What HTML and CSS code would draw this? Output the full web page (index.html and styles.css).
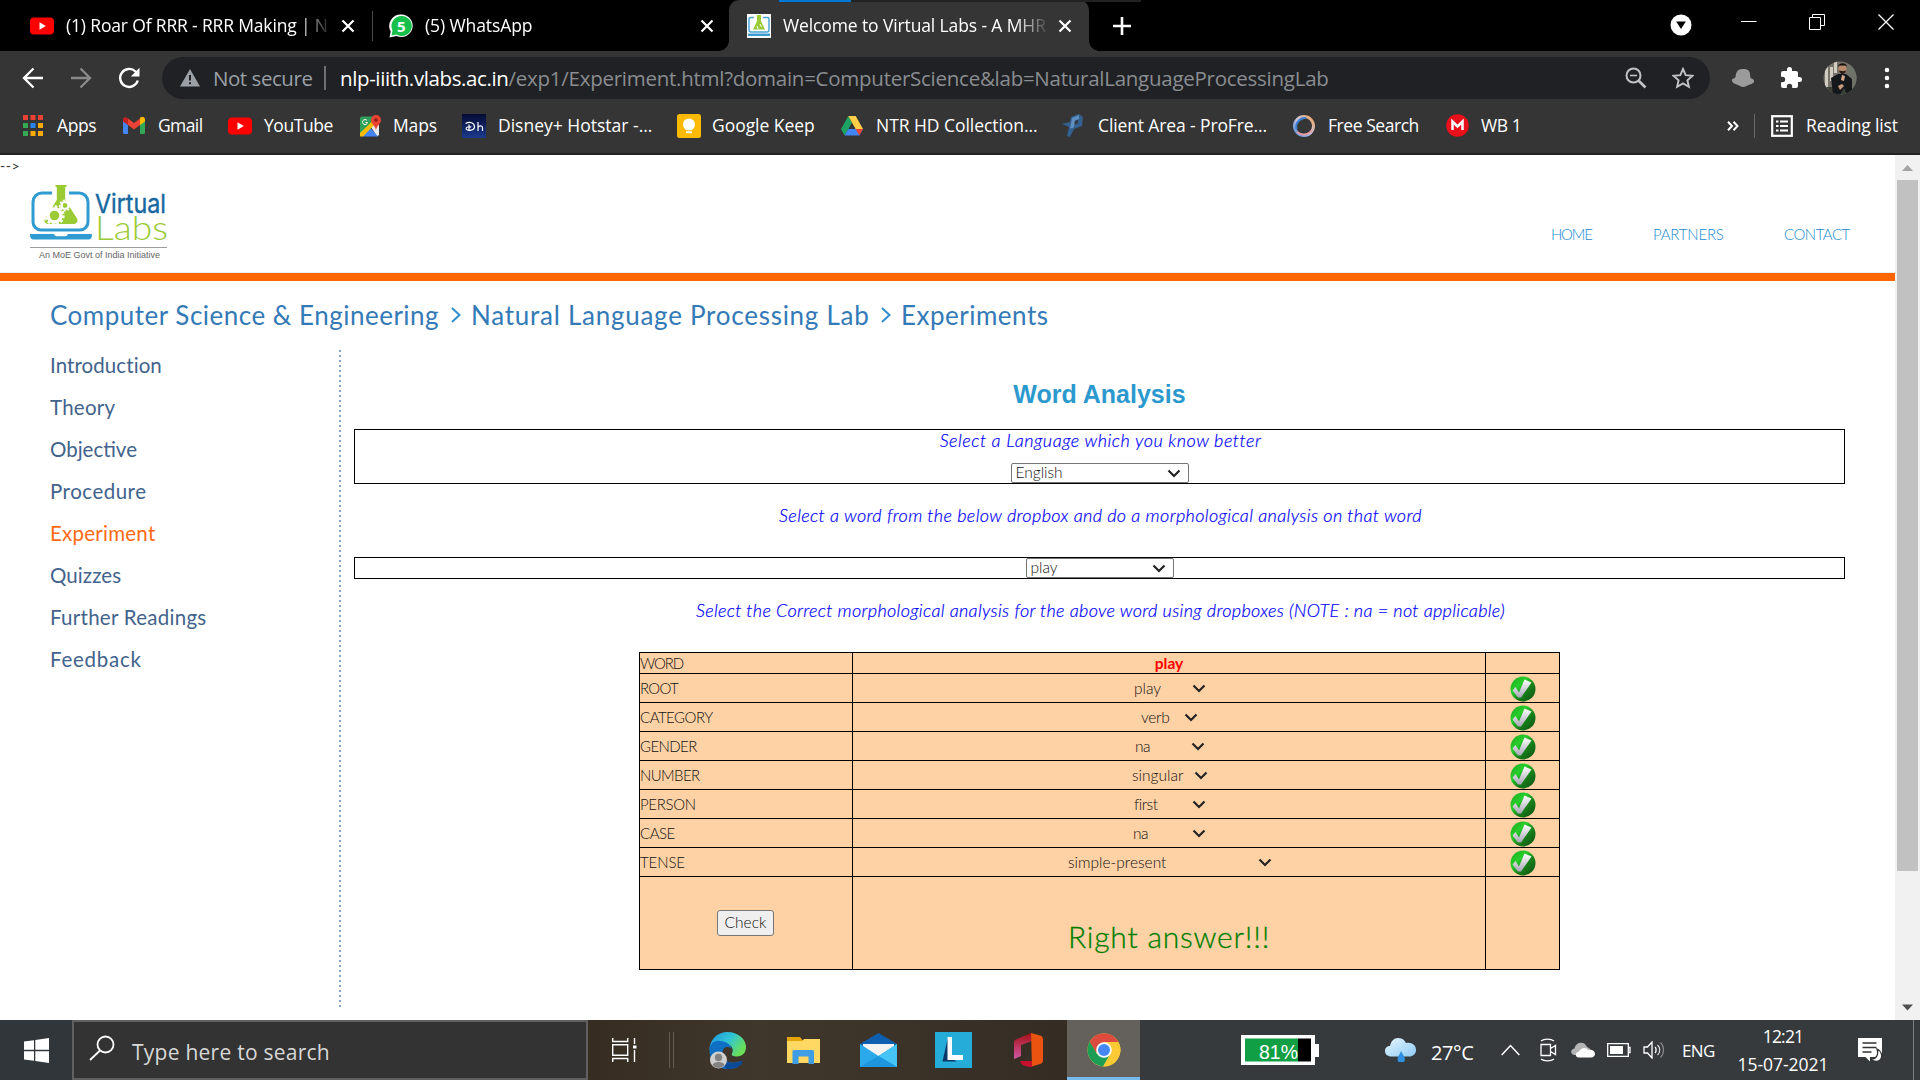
FILE: index.html
```html
<!DOCTYPE html>
<html lang="en">
<head>
<meta charset="utf-8">
<title>Welcome to Virtual Labs</title>
<link rel="stylesheet" href="styles.css">
</head>
<body>
<svg class="defs" width="0" height="0">
  <defs>
    <linearGradient id="tickGreen" x1="0" y1="0" x2="1" y2="1"><stop offset="0" stop-color="#1fa51f"/><stop offset=".35" stop-color="#27cf2b"/><stop offset=".6" stop-color="#178019"/><stop offset="1" stop-color="#0d4d12"/></linearGradient>
    <linearGradient id="tickWhite" x1="0" y1="0" x2="0" y2="1"><stop offset="0" stop-color="#ffffff"/><stop offset="1" stop-color="#a9a7b8"/></linearGradient>
    <symbol id="close" viewBox="0 0 14 14"><path d="M1.5 1.5l11 11M12.5 1.5l-11 11" stroke="#fff" stroke-width="2.2" fill="none"/></symbol>
    <symbol id="youtube" viewBox="0 0 24 24"><rect y="3.5" width="24" height="17" rx="4" fill="#f00"/><path d="M9.5 8.2v7.6l6.3-3.8z" fill="#fff"/></symbol>
    <symbol id="caret" viewBox="0 0 14 14"><path d="M1.500 4.500L7 10l5.500-5.500" stroke="#222" stroke-width="2.200" fill="none"/></symbol>
    <symbol id="crumb" viewBox="0 0 12 16"><path d="M2 1l7.500 7L2 15" stroke="#2f8fd0" stroke-width="2" fill="none"/></symbol>
    <symbol id="tick" viewBox="0 0 26 26"><circle cx="13" cy="13" r="12.500" fill="url(#tickGreen)"/><path d="M2.500 14.500l3-3.500 3.500 5.500L14.500 3.500l7 3L11 21.500H8z" fill="url(#tickWhite)"/></symbol>
  </defs>
</svg>

<header class="tabstrip">
  <div class="tab tab-first"><svg width="24" height="24"><use href="#youtube"/></svg><span class="tab-title t-rrr">(1) Roar Of RRR - RRR Making | N</span><svg width="14" height="14"><use href="#close"/></svg></div>
  <i class="tab-rule"></i>
  <div class="tab tab-second">
    <svg width="24" height="24" viewBox="0 0 24 24"><path d="M12.500.5a11.300 11.300 0 1 1-5 21.500L.5 23.500l1.200-6A11.500 11.500 0 0 1 12.500.5z" fill="#fff"/><path d="M12.500 2a10 10 0 1 1-5 18.500L2.500 21.500l1-5A10 10 0 0 1 12.500 2z" fill="#17bf4b"/><text x="12.200" y="17.500" text-anchor="middle" class="wa-count">5</text></svg>
    <span class="tab-title t-wa">(5) WhatsApp</span><svg width="14" height="14"><use href="#close"/></svg></div>
  <div class="tab tab-active">
    <svg width="24" height="24" viewBox="0 0 24 24"><rect width="24" height="24" fill="#fff"/><path d="M7 3.500H3.500a1.500 1.500 0 0 0-1.500 1.500V16a2 2 0 0 0 2 2h16a2 2 0 0 0 2-2V5a1.500 1.500 0 0 0-1.500-1.500H16" fill="none" stroke="#4ba6d6" stroke-width="1.500"/><path d="M10 1h4v6l4 8.500H6L10 7z" fill="#9acb35"/><path d="M1 19.500h22V22H1z" fill="#3d9bd0"/><path d="M10 12l1 3M13 10l1.500 3" stroke="#fff"/></svg>
    <span class="tab-title t-vl">Welcome to Virtual Labs - A MHR</span><svg width="14" height="14"><use href="#close"/></svg></div>
  <svg class="new-tab" width="18" height="18" viewBox="0 0 18 18"><path d="M9 0v18M0 9h18" stroke="#fff" stroke-width="2.600"/></svg>
  <div class="window-controls">
    <svg width="22" height="22" viewBox="0 0 22 22"><circle cx="11" cy="11" r="10.500" fill="#fff"/><path d="M6.200 7.500h9.600L11 15z" fill="#000"/></svg>
    <svg class="wc wc-min" width="16" height="16" viewBox="0 0 16 16"><path d="M0 7.500h15.500" stroke="#fff"/></svg>
    <svg class="wc wc-max" width="16" height="16" viewBox="0 0 16 16"><path d="M.5 3.500h11v12H.5zM3.500 3V.5h12v11h-3.500" stroke="#fff" fill="none"/></svg>
    <svg class="wc" width="16" height="16" viewBox="0 0 16 16"><path d="M.5.5l15 15M15.500.5l-15 15" stroke="#fff" stroke-width="1.300"/></svg>
  </div>
  <div class="load-line"><i></i></div>
</header>

<div class="toolbar">
  <svg width="22" height="22" viewBox="0 0 22 22"><path d="M21 11H2.500M11.500 1.500L2 11l9.500 9.500" stroke="#fff" stroke-width="2.300" fill="none"/></svg>
  <svg class="forward" width="22" height="22" viewBox="0 0 22 22"><path d="M1 11h18.500M10.500 1.500L20 11l-9.500 9.500" stroke="#8a8a8a" stroke-width="2.300" fill="none"/></svg>
  <svg class="reload" width="22" height="22" viewBox="0 0 22 22"><path d="M19.800 13.500A9 9 0 1 1 17.500 4.500l2 2" stroke="#fff" stroke-width="2.400" fill="none"/><path d="M21.500.8v8.700h-8.700z" fill="#fff"/></svg>
  <div class="omnibox">
    <svg width="20" height="18" viewBox="0 0 20 18"><path d="M10 0l10 17.500H0z" fill="#9aa0a6"/><path d="M10 6v5.500M10 13.300v2" stroke="#202124" stroke-width="2"/></svg>
    <span class="not-secure">Not secure</span><i class="omni-rule"></i>
    <span class="url"><b class="u-host">nlp-iiith.vlabs.ac.in</b><span class="u-path">/exp1/Experiment.html?domain=ComputerScience&amp;lab=NaturalLanguageProcessingLab</span></span>
    <svg class="zoomed" width="22" height="22" viewBox="0 0 22 22"><circle cx="8.500" cy="8.500" r="7" stroke="#c0c2c4" stroke-width="2" fill="none"/><path d="M5 8.500h7" stroke="#c0c2c4" stroke-width="1.600"/><path d="M13.500 13.500l7 7" stroke="#c0c2c4" stroke-width="2.600"/></svg>
    <svg width="22" height="22" viewBox="0 0 22 22"><path d="M11 2l2.700 6.200 6.800.6-5.100 4.500 1.500 6.600-5.900-3.500-5.900 3.500 1.500-6.600L1.500 8.800l6.800-.6z" stroke="#c0c2c4" stroke-width="1.900" fill="none"/></svg>
  </div>
  <svg class="hat" width="24" height="20" viewBox="0 0 24 20"><path d="M12 1c5 0 6.500 1.500 7 5l.5 4c3 1 4 2.500 3.500 4-1 2-5 2.500-6.500 3.500-2 1.500-5 2-7.500.5C6.500 16.500 2 16 .8 12.500.5 10.500 4 10.500 4.500 9 5 6 5 1 12 1z" fill="#9b9b9b"/></svg>
  <svg class="puzzle" width="24" height="24" viewBox="0 0 24 24"><path d="M20.500 11H19V7a2 2 0 0 0-2-2h-4V3.500a2.500 2.500 0 0 0-5 0V5H4a2 2 0 0 0-2 2v3.800h1.500a2.700 2.700 0 0 1 0 5.400H2V20a2 2 0 0 0 2 2h3.800v-1.500a2.700 2.700 0 0 1 5.400 0V22H17a2 2 0 0 0 2-2v-4h1.500a2.500 2.500 0 0 0 0-5z" fill="#fff"/></svg>
  <svg class="avatar" width="34" height="34" viewBox="0 0 34 34"><clipPath id="av"><circle cx="17" cy="17" r="16.500"/></clipPath><g clip-path="url(#av)"><rect width="34" height="34" fill="#77736b"/><path d="M2 0h3v34H2zM7 6h3v14H7zM11 0h3v12h-3z" fill="#d0ccc0"/><path d="M0 26h34v8H0z" fill="#3b4038"/><path d="M26 4h8v24h-8z" fill="#6d7368"/><path d="M8 17l7-4h8l6 5v16h-5l-3-7-4 7H10z" fill="#15181a"/><circle cx="19.500" cy="8" r="4" fill="#b98a6e"/><path d="M15 6c0-5 9-5 9 0l-1.500-1.500h-6z" fill="#17110e"/><path d="M16 9.500c1 4.500 6 4.500 7 0l-3 .8z" fill="#2a1c16"/><path d="M19 14l3 1-1 5-3-1z" fill="#d5ab8e"/><path d="M15 25l4-2 2 2-4 4z" fill="#c99c80"/></g></svg>
  <svg class="menu-dots" width="6" height="22" viewBox="0 0 6 22"><g fill="#fff"><circle cx="3" cy="3" r="2.300"/><circle cx="3" cy="11" r="2.300"/><circle cx="3" cy="19" r="2.300"/></g></svg>
</div>

<nav class="bookmarks">
  <a class="bm bm-apps"><svg width="20" height="22" viewBox="0 0 20 22"><path d="M0 0h5v5H0zM7.500 0h5v5h-5zM15 0h5v5h-5z" fill="#ea4335"/><path d="M0 8h5v5H0zM0 16h5v5H0z" fill="#34a853"/><path d="M7.500 8h5v5h-5z" fill="#2a84f0"/><path d="M15 8h5v5h-5zM7.500 16h5v5h-5zM15 16h5v5h-5z" fill="#fbab08"/></svg><span>Apps</span></a>
  <a class="bm bm-gmail"><svg width="22" height="17" viewBox="0 0 22 17"><path d="M0 3v12.500A1.500 1.500 0 0 0 1.500 17H5V7z" fill="#4285f4"/><path d="M22 3v12.500a1.500 1.500 0 0 1-1.500 1.500H17V7z" fill="#34a853"/><path d="M17 2v6l5-3.500V2.500C22 0 19-1 17 .8z" fill="#fbbc04"/><path d="M5 8V1.500l6 4.500 6-4.500V8l-6 4.500z" fill="#ea4335"/><path d="M0 2.500v2L5 8V1.500C3-.5 0 0 0 2.500z" fill="#c5221f"/></svg><span>Gmail</span></a>
  <a class="bm bm-yt"><svg width="24" height="24"><use href="#youtube"/></svg><span>YouTube</span></a>
  <a class="bm bm-maps"><svg width="22" height="22" viewBox="0 0 22 22"><path d="M0 3.500a2 2 0 0 1 2-2h15V8L6 18l-6 1z" fill="#2f9e58"/><path d="M11 12l6-6 2 1v13L17 21.500z" fill="#e8eaed"/><path d="M2 21.500l8.500-8.500 7.500 8.500z" fill="#4285f4"/><path d="M0 18L13.500 5l2.500 3L3 21.500H0z" fill="#fbbc04"/><path d="M16 0a5 5 0 0 1 5 5c0 4-4 5-5 10-1-5-5-6-5-10a5 5 0 0 1 5-5z" fill="#ea4335"/><circle cx="16" cy="5" r="1.800" fill="#8b1a12"/><path d="M7 5.500a2.500 2.500 0 1 0 .5 2H5.500" stroke="#fff" fill="none"/></svg><span>Maps</span></a>
  <a class="bm bm-hot"><svg width="24" height="24" viewBox="0 0 24 24"><defs><linearGradient id="hs" x2="0" y2="1"><stop offset="0" stop-color="#060b34"/><stop offset="1" stop-color="#1b3a8c"/></linearGradient></defs><rect width="24" height="24" fill="url(#hs)"/><path d="M3.500 9.500c4-2 9-1 9 3.200 0 4-7 4.500-8.300 2.300-.8-1.600 3.300-3 5-1.800M7 10.500v6M16 8v9M16 13.500c1-2.300 4.500-2.300 4.500.3V17" stroke="#fff" stroke-width="1.200" fill="none"/></svg><span>Disney+ Hotstar -...</span></a>
  <a class="bm bm-keep"><svg width="24" height="24" viewBox="0 0 24 24"><rect width="24" height="24" rx="2.500" fill="#fdba03"/><circle cx="12" cy="10.500" r="6" fill="#fff"/><path d="M8.500 12h7v4h-7zM9 17.300h6v2H9z" fill="#fff"/></svg><span>Google Keep</span></a>
  <a class="bm bm-drive"><svg width="22" height="20" viewBox="0 0 22 20"><path d="M7.300 0L0 13l3.700 6.500L11 6.500z" fill="#1da362"/><path d="M7.300 0h7.400L22 13h-7.400z" fill="#ffcf48"/><path d="M3.700 19.500L7.300 13H22l-3.700 6.500z" fill="#4285f4"/><path d="M18.300 19.500L14.600 13H22z" fill="#ea4335"/></svg><span>NTR HD Collection...</span></a>
  <a class="bm bm-pro"><svg width="22" height="24" viewBox="0 0 22 24"><path d="M9 3l8-3 4 3-1 9-8 3-4 8-3-1 2-9-7-3 8-2z" fill="#33608f"/><path d="M10 4l7-3v4l-4 1.500-1 7-4 1z" fill="#5f8fc0"/><path d="M13 7l3-1-.5 3.500-3 1z" fill="#353535"/></svg><span>Client Area - ProFre...</span></a>
  <a class="bm bm-free"><svg width="24" height="24" viewBox="0 0 24 24"><defs><linearGradient id="rg" x1="0" y1="1" x2="1" y2="0"><stop offset="0" stop-color="#4b8fe0"/><stop offset=".5" stop-color="#c9c3dc"/><stop offset="1" stop-color="#f1a35a"/></linearGradient></defs><circle cx="12" cy="12" r="9.500" stroke="url(#rg)" stroke-width="3" fill="none"/><path d="M5 18a10 10 0 0 0 15-2" stroke="#e59aa0" stroke-width="2" fill="none"/><path d="M4.500 15A9 9 0 0 1 14 4" stroke="#3b7fd1" stroke-width="2" fill="none"/></svg><span>Free Search</span></a>
  <a class="bm bm-wb"><svg width="23" height="23" viewBox="0 0 23 23"><circle cx="11.500" cy="11.500" r="11.300" fill="#e8101a"/><path d="M6.500 16V7.500l5 5 5-5V16" stroke="#fff" stroke-width="2.500" fill="none"/></svg><span>WB 1</span></a>
  <svg class="more" width="12" height="10" viewBox="0 0 12 10"><path d="M1 .8L5 5 1 9.200M6.500.8l4 4.200-4 4.200" stroke="#fff" stroke-width="2" fill="none"/></svg>
  <i class="bm-rule"></i>
  <a class="bm bm-list"><svg width="22" height="22" viewBox="0 0 22 22"><rect x="1.200" y="1.200" width="19.600" height="19.600" stroke="#fff" stroke-width="2.200" fill="none"/><path d="M5 6.500h2.500M9 6.500h8M5 11h2.500M9 11h8M5 15.500h2.500M9 15.500h8" stroke="#fff" stroke-width="2.200"/></svg><span>Reading list</span></a>
</nav>

<div class="page">
  <div class="content">
    <div class="masthead">
      <div class="stray">--&gt;</div>
      <div class="mast-row">
        <svg class="logo" width="140" height="76" viewBox="0 0 140 76">
          <path d="M22 8H12a9 9 0 0 0-9 9v20a8 8 0 0 0 8 8h39a8 8 0 0 0 8-8V17a9 9 0 0 0-9-9H39" stroke="#2f9bd0" stroke-width="3" fill="none"/>
          <path d="M25.500 0h11v2h-1.300v13L47 33.500c1.500 3-.5 5.500-3.500 5.500h-25c-3 0-5-2.500-3.500-5.500L26.800 15V2h-1.300z" fill="#9acb35"/>
          <circle cx="24.500" cy="30.500" r="6.500" stroke="#fff" stroke-width="3.400" fill="none"/><circle cx="24.500" cy="30.500" r="9" stroke="#fff" stroke-width="2.400" stroke-dasharray="2.700 2" fill="none"/>
          <circle cx="35" cy="20.500" r="3.500" stroke="#fff" stroke-width="2.200" fill="none"/><circle cx="35" cy="20.500" r="5.300" stroke="#fff" stroke-width="1.600" stroke-dasharray="2 1.700" fill="none"/>
          <path d="M0 49h24c1 2 2 2.300 4 2.300h6c2 0 3-.3 4-2.300h24c0 4-1 5.500-4 5.500H4c-3 0-4-1.500-4-5.500z" fill="#2f9bd0"/>
          <text x="65" y="28" class="lg-virtual" textLength="71" lengthAdjust="spacingAndGlyphs">Virtual</text>
          <text x="65" y="55" class="lg-labs" textLength="73" lengthAdjust="spacingAndGlyphs">Labs</text>
          <path d="M0 62.500h137" stroke="#9c9c9c" stroke-width="1.200"/>
          <text x="9" y="73" class="lg-sub" textLength="121" lengthAdjust="spacingAndGlyphs">An MoE Govt of India Initiative</text>
        </svg>
        <div class="mast-nav"><a class="n-home">HOME</a><a class="n-part">PARTNERS</a><a class="n-cont">CONTACT</a></div>
      </div>
    </div>
    <div class="breadcrumb"><a class="c-cse">Computer Science &amp; Engineering</a><svg width="12" height="16"><use href="#crumb"/></svg><a class="c-nlp">Natural Language Processing Lab</a><svg width="12" height="16"><use href="#crumb"/></svg><a class="c-exp">Experiments</a></div>
    <div class="columns">
      <ul class="side">
        <li class="s1">Introduction</li><li class="s2">Theory</li><li class="s3">Objective</li><li class="s4">Procedure</li><li class="s5 current">Experiment</li><li class="s6">Quizzes</li><li class="s7">Further Readings</li><li class="s8">Feedback</li>
      </ul>
      <i class="dots"></i>
      <main class="lab">
        <h1>Word Analysis</h1>
        <div class="box">
          <p class="hint hint-lang">Select a Language which you know better</p>
          <div class="select select-lang"><span>English</span><svg width="14" height="14"><use href="#caret"/></svg></div>
        </div>
        <p class="hint hint-word">Select a word from the below dropbox and do a morphological analysis on that word</p>
        <div class="box box-word"><div class="select select-word"><span>play</span><svg width="14" height="14"><use href="#caret"/></svg></div></div>
        <p class="hint hint-pick">Select the Correct morphological analysis for the above word using dropboxes (NOTE : na = not applicable)</p>
        <div class="grid">
          <div class="g1">WORD</div><div class="mid"><b>play</b></div><div></div>
          <div class="g2">ROOT</div><div class="pick pick-root"><span>play</span><svg width="14" height="14"><use href="#caret"/></svg></div><div class="ok"><svg width="26" height="26"><use href="#tick"/></svg></div>
          <div class="g3">CATEGORY</div><div class="pick pick-cat"><span>verb</span><svg width="14" height="14"><use href="#caret"/></svg></div><div class="ok"><svg width="26" height="26"><use href="#tick"/></svg></div>
          <div class="g4">GENDER</div><div class="pick pick-gen"><span>na</span><svg width="14" height="14"><use href="#caret"/></svg></div><div class="ok"><svg width="26" height="26"><use href="#tick"/></svg></div>
          <div class="g4">NUMBER</div><div class="pick pick-num"><span>singular</span><svg width="14" height="14"><use href="#caret"/></svg></div><div class="ok"><svg width="26" height="26"><use href="#tick"/></svg></div>
          <div class="g6">PERSON</div><div class="pick pick-per"><span>first</span><svg width="14" height="14"><use href="#caret"/></svg></div><div class="ok"><svg width="26" height="26"><use href="#tick"/></svg></div>
          <div class="g3">CASE</div><div class="pick pick-case"><span>na</span><svg width="14" height="14"><use href="#caret"/></svg></div><div class="ok"><svg width="26" height="26"><use href="#tick"/></svg></div>
          <div class="g8">TENSE</div><div class="pick pick-tense"><span>simple-present</span><svg width="14" height="14"><use href="#caret"/></svg></div><div class="ok"><svg width="26" height="26"><use href="#tick"/></svg></div>
          <div class="mid"><button class="check">Check</button></div><div class="answer">Right answer!!!</div><div></div>
        </div>
      </main>
    </div>
  </div>
  <div class="scrollbar">
    <svg width="25" height="25" viewBox="0 0 25 25"><path d="M7 16h11l-5.500-6z" fill="#a3a3a3"/></svg>
    <i></i>
    <svg width="25" height="25" viewBox="0 0 25 25"><path d="M7 9.500h11L12.500 15.500z" fill="#505050"/></svg>
  </div>
</div>

<footer class="taskbar">
  <div class="start"><svg width="25" height="25" viewBox="0 0 25 25"><path d="M0 3.600l10-1.400v9.600H0zM11.300 2L25 0v11.800H11.300zM0 13.200h10v9.600L0 21.400zM11.300 13.200H25V25l-13.700-2z" fill="#fff"/></svg></div>
  <div class="search"><svg width="26" height="26" viewBox="0 0 26 26"><circle cx="16.500" cy="9.500" r="8" stroke="#fff" stroke-width="1.800" fill="none"/><path d="M11 15.500L1 25" stroke="#fff" stroke-width="1.800"/></svg><span>Type here to search</span></div>
  <div class="pinned">
    <svg class="taskview" width="26" height="24" viewBox="0 0 26 24"><path d="M.7 0v3.500h15V0M.7 6.700h15v10.600H.7zM.7 24v-3.500h15V24M22.500 0v6M22.500 12v12" stroke="#fff" stroke-width="1.400" fill="none"/><path d="M21 7.500h3.500v3H21z" fill="#fff"/></svg>
    <i class="grip"></i>
    <svg width="37" height="37" viewBox="0 0 37 37"><defs><linearGradient id="ed1" x1="0" x2="1" y2=".5"><stop offset="0" stop-color="#1c92dc"/><stop offset=".55" stop-color="#30c4d8"/><stop offset="1" stop-color="#69e05a"/></linearGradient></defs><path d="M.5 18C.5 8 8 0 18.500 0 29 0 37 7 37 15c0 6-4 9.500-9 9.500-4 0-6-1-5-3 2-4 0-9-6-9-8 0-13 5-16.500 5.500z" fill="url(#ed1)"/><path d="M.5 18c0-6 5-10 10-9 7 0 12 4 12 8-2-3-9-3-9 4 0 8 8 12 17 8.500 2-.8 3 .5 2 2C29 36 24 37 19 37 8 37 .5 29 .5 18z" fill="#0f6fc4"/><path d="M13.500 20c-1 9 8 14 18 9 1.500-.6 2.500.8 1.500 2C30 35 24.500 37 19 37c-6-2-9-12-5.500-17z" fill="#0b4a96"/><circle cx="9.500" cy="28" r="8.500" fill="#cfcfcf"/><circle cx="9.500" cy="25.500" r="3.700" fill="#828282"/><path d="M3.500 33c1-4 11-4 12 0-3 4-9 4-12 0z" fill="#828282"/></svg>
    <svg class="explorer" width="33" height="28" viewBox="0 0 33 28"><path d="M0 1h13l2.500 3H33v5H0z" fill="#e5a50a"/><path d="M0 5h15.500L17 3h16v24H0z" fill="#ffd763"/><path d="M5.500 28V15.500a1.500 1.500 0 0 1 1.500-1.500h18.500a1.500 1.500 0 0 1 1.500 1.500V28h-5.500v-7.500h-10V28z" fill="#3f9de6"/></svg>
    <svg class="mail" width="37" height="34" viewBox="0 0 37 34"><path d="M0 11L18.500 0 37 11v8H0z" fill="#0f5fb0"/><path d="M3 11h31v12H3z" fill="#f3f3f3"/><path d="M0 11l18.500 12L37 11v23H0z" fill="#2ba8ea"/><path d="M18.500 23L37 11v23z" fill="#45c4f5"/><path d="M0 34l18.500-11L37 34z" fill="#1d96de"/></svg>
    <svg class="lenovo" width="37" height="36" viewBox="0 0 37 36"><path d="M0 0h37v36H0z" fill="#25acd9"/><path d="M13 5L7.500 29.500h14L14 24z" fill="#0b3868"/><path d="M12.500 5H17v18h11v5H12.500z" fill="#fff"/></svg>
    <svg width="29" height="34" viewBox="0 0 29 34"><defs><linearGradient id="of" x2="0" y2="1"><stop offset="0" stop-color="#a80f14"/><stop offset="1" stop-color="#d359a5"/></linearGradient></defs><path d="M17 0L3 6a4 4 0 0 0-3 4v16l7-3V12l11-4z" fill="url(#of)"/><path d="M17 0l9 2.500a4 4 0 0 1 3 4V27a4 4 0 0 1-3 4l-8 2.500z" fill="#ea5310"/><path d="M6 28h12v6h-3c-4-1-8-2-9-6z" fill="#c8102e"/></svg>
  </div>
  <div class="running"><svg width="34" height="34" viewBox="0 0 34 34"><circle cx="17" cy="17" r="16.500" fill="#fbc934"/><path d="M2.700 8.700A16.500 16.500 0 0 1 31.300 8.700L31 9H17L9 20z" fill="#dd4b3e"/><path d="M2.700 8.700L10 21l13 0-7 12.400A16.500 16.500 0 0 1 2.700 8.700z" fill="#1c9e57"/><path d="M17 9h14.300A16.500 16.500 0 0 1 16.500 33.500L24 21z" fill="#fbc934"/><circle cx="17" cy="17" r="7.800" fill="#fff"/><circle cx="17" cy="17" r="6" fill="#4587f3"/></svg></div>
  <div class="tray">
    <svg width="78" height="30" viewBox="0 0 78 30"><path d="M0 0h74v9h4v13h-4v8H0z" fill="#fff"/><path d="M4 3.500h53v23H4z" fill="#119f45"/><path d="M57 3.500h13v23H57z" fill="#000"/><text x="18" y="23.500" class="batt-text" textLength="39" lengthAdjust="spacingAndGlyphs">81%</text></svg>
    <svg class="weather" width="31" height="24" viewBox="0 0 31 24"><defs><linearGradient id="wc" x2="1" y2="1"><stop offset="0" stop-color="#e8f6ff"/><stop offset="1" stop-color="#8ecbf5"/></linearGradient></defs><path d="M7 18.500C2 18.500 0 16 0 13s2-5 5-5c1-5 4-8 8-8 5 0 7 3 8 5 6-1 10 2 10 7 0 4-3 6.500-7 6.500z" fill="url(#wc)"/><path d="M16 13c2 4 4 6 4 8a3.500 3.500 0 0 1-7.500 0c0-2 2-4 3.500-8z" fill="#2f8ee0"/></svg>
    <span class="temp">27°C</span>
    <svg width="19" height="12" viewBox="0 0 19 12"><path d="M.7 11L9.500 1.500 18.300 11" stroke="#fff" stroke-width="1.500" fill="none"/></svg>
    <svg class="cam" width="17" height="24" viewBox="0 0 17 24"><path d="M1 6.500h9.500v11H1zM10.500 10.500l5-3v9l-5-3M1 3c3-2.500 10-2.500 13 0M1 21c3 2.500 10 2.500 13 0" stroke="#fff" stroke-width="1.300" fill="none"/></svg>
    <svg width="25" height="16" viewBox="0 0 25 16"><path d="M5 13C0 13 0 7 4.500 6.500 6-1 15-1 17 5c5 1 5 8 0 8z" fill="#b5b5b5"/><path d="M8 15.500c-3-1-3-5 .5-5.500C11 5 17 5 18 8c4-1 7 1 7 4 0 2-2 3.500-4 3.500z" fill="#fff"/></svg>
    <svg class="batt" width="24" height="14" viewBox="0 0 24 14"><path d="M.7.7h20.600v12.600H.7zM21.300 4.500H23v5h-1.700" stroke="#fff" stroke-width="1.300" fill="none"/><path d="M3 3h13v8H3z" fill="#fff"/></svg>
    <svg width="23" height="18" viewBox="0 0 23 18"><path d="M1 6h3.500L9 1v16l-4.500-5H1zM12 6c1.500 1.500 1.500 4.500 0 6" stroke="#fff" stroke-width="1.300" fill="none"/><path d="M14.500 4c3 2.500 3 7.500 0 10" stroke="#ddd" stroke-width="1.200" fill="none"/><path d="M17.500 1.500c4 4 4 11 0 15" stroke="#888" stroke-width="1.200" fill="none"/></svg>
    <span class="lang">ENG</span>
    <div class="clock"><span class="time">12:21</span><span class="date">15-07-2021</span></div>
    <svg class="notif" width="25" height="24" viewBox="0 0 25 24"><path d="M0 0h24v19H12v4.500L7.500 19H0z" fill="#fff"/><path d="M4.500 5h14M4.500 9.500h14M4.500 14h9" stroke="#333" stroke-width="1.300"/><path d="M19 11c5 2.500 6 8 3 11-3 2.500-8 1-9-1 5 .5 8-4 6-10z" fill="#fff" stroke="#333" stroke-width="1.300"/></svg>
    <i class="desktop-edge"></i>
  </div>
</footer>
</body>
</html>
```
FILE: styles.css
```css
* { box-sizing: border-box; }
body { margin: 0; width: 1920px; height: 1080px; overflow: hidden; background: #fff; font-family: "Lato", sans-serif; display: flex; flex-direction: column; }
svg { flex: none; display: block; }
.defs { position: absolute; }
i { font-style: normal; }

/* Browser chrome */
.tabstrip, .toolbar, .bookmarks, .taskbar { font-family: "Open Sans", sans-serif; color: #fff; white-space: nowrap; }
.tabstrip { position: relative; height: 51px; background: #000; display: flex; }
.tab { position: relative; display: flex; align-items: center; padding-right: 17px; }
.tab-title { width: 264px; margin: 0 11px 0 12px; padding-bottom: 2px; overflow: hidden; font-size: 17.5px; line-height: 30px; -webkit-mask-image: linear-gradient(90deg, #000 88%, transparent 101%); mask-image: linear-gradient(90deg, #000 88%, transparent 101%); }
.t-rrr { letter-spacing: -.16px; }
.t-wa { letter-spacing: -.1px; }
.t-vl { letter-spacing: -.12px; }
.tab-first { padding-left: 30px; }
.tab-second { padding: 0 15px 0 16px; }
.tab-active { padding-left: 18px; background: #353535; border-radius: 10px 10px 0 0; }
.tab-active::before, .tab-active::after { content: ""; position: absolute; bottom: 0; width: 10px; height: 10px; }
.tab-active::before { left: -10px; background: radial-gradient(circle at 0 0, #000 9.5px, #353535 10px); }
.tab-active::after { right: -10px; background: radial-gradient(circle at 100% 0, #000 9.5px, #353535 10px); }
.tab-rule { width: 1px; height: 30px; margin-top: 11px; background: #4a4a4a; }
.wa-count { font: 700 15px "Open Sans", sans-serif; fill: #fff; }
.new-tab { margin: 17px 0 0 24px; }
.window-controls { margin-left: auto; padding: 14px 26px 0 0; display: flex; }
.wc { margin-left: 53px; }
.wc-min { margin-left: 49px; }
.wc-max { margin-left: 52px; }
.load-line { position: absolute; left: 779px; top: 0; width: 362px; height: 2px; background: #222; }
.load-line i { display: block; width: 72px; height: 2px; background: #0078d7; }

.toolbar { height: 54px; background: #353535; display: flex; align-items: center; padding-left: 22px; }
.forward { margin-left: 26px; }
.reload { margin-left: 26px; }
.omnibox { width: 1548px; height: 42px; margin-left: 22px; padding: 0 16px 0 18px; border-radius: 21px; background: #202124; display: flex; align-items: center; font-size: 20.5px; line-height: 40px; }
.not-secure { width: 111px; margin-left: 13px; color: #9aa0a6; letter-spacing: -.45px; }
.omni-rule { width: 2px; height: 24px; background: #6c6f73; }
.url { width: 1285px; margin-left: 14px; color: #8a8d91; }
.u-host { font-weight: 400; color: #fff; letter-spacing: -.38px; }
.u-path { letter-spacing: -.26px; }
.zoomed { margin-right: 25px; }
.hat { margin-left: 21px; }
.puzzle { margin-left: 24px; }
.avatar { margin-left: 20px; }
.menu-dots { margin-left: 27px; }

.bookmarks { height: 50px; background: #353535; border-bottom: 2px solid #222; display: flex; align-items: center; padding: 0 0 7px 23px; font-size: 17.5px; }
.bm { display: flex; align-items: center; gap: 12px; line-height: 30px; }
.bm span { padding-bottom: 1px; }
.bm-apps { width: 100px; gap: 14px; letter-spacing: -.4px; }
.bm-gmail { width: 105px; gap: 13px; letter-spacing: -.6px; }
.bm-yt { width: 132px; letter-spacing: -.45px; }
.bm-maps { width: 102px; gap: 11px; letter-spacing: -.15px; }
.bm-hot { width: 215px; }
.bm-keep { width: 164px; gap: 11px; letter-spacing: -.05px; }
.bm-drive { width: 221px; gap: 13px; letter-spacing: -.05px; }
.bm-pro { width: 230px; gap: 14px; letter-spacing: -.12px; }
.bm-free { width: 154px; letter-spacing: -.45px; }
.bm-wb { width: 281px; letter-spacing: -.4px; }
.more { margin-right: 15px; }
.bm-rule { width: 1px; height: 24px; background: #6a6a6a; margin-right: 16px; }
.bm-list { gap: 13px; letter-spacing: -.15px; }

/* Page */
.page { height: 865px; display: flex; }
.content { width: 1895px; }
.masthead { height: 126px; border-bottom: 8px solid #f60; }
.stray { height: 22px; font-size: 14px; line-height: 21px; letter-spacing: .6px; color: #333; }
.mast-row { height: 96px; display: flex; padding: 8px 45px 0 30px; border-bottom: 1px solid #eee; }
.logo { overflow: visible; }
.lg-virtual { font: 400 26px "Inter", sans-serif; fill: #1668a0; stroke: #1668a0; stroke-width: .4px; }
.lg-labs { font: 300 33px "Lato", sans-serif; fill: #9acb35; }
.lg-sub { font: 9px "Liberation Sans", sans-serif; fill: #666; }
.mast-nav { margin: 39px 0 0 auto; display: flex; font-size: 15px; font-weight: 300; line-height: 20px; color: #1a8bcf; white-space: nowrap; }
.n-home { width: 41px; margin-right: 61px; letter-spacing: -1.2px; }
.n-part { width: 71px; margin-right: 60px; letter-spacing: -.2px; }
.n-cont { width: 66px; letter-spacing: -.5px; }
.breadcrumb { display: flex; align-items: center; padding: 18px 0 0 50px; height: 49px; font-size: 26px; line-height: 30px; color: #337ab7; white-space: nowrap; }
.breadcrumb svg { margin: 0 9px 0 11px; }
.c-cse { width: 389px; letter-spacing: .5px; }
.c-nlp { width: 398px; letter-spacing: .74px; }
.c-exp { width: 147px; letter-spacing: .5px; }
.columns { margin-top: 14px; display: flex; white-space: nowrap; }
.side { list-style: none; margin: 0; padding: 0 0 0 50px; width: 339px; font-size: 20.500px; line-height: 42px; color: #42638c; }
.s1 { letter-spacing: .08px; }
.s2 { letter-spacing: .25px; }
.s3 { letter-spacing: 0; }
.s4 { letter-spacing: .5px; }
.s5 { letter-spacing: .24px; }
.s6 { letter-spacing: .08px; }
.s7 { letter-spacing: .27px; }
.s8 { letter-spacing: .75px; }
.current { color: #ff6a13; }
.dots { width: 2px; height: 658px; margin-top: 6px; background: repeating-linear-gradient(#86a5c8 0 2px, transparent 2px 5px); }
.lab { width: 1491px; margin-left: 13px; padding-top: 35px; }
h1 { margin: 0 0 20px; font: 700 25px/30px "Liberation Sans", sans-serif; color: #2c99ce; text-align: center; }
.box { height: 55px; border: 1px solid #000; display: flex; flex-direction: column; align-items: center; }
.box-word { height: 22px; margin-top: 31px; }
.hint { margin: 0; padding-left: 2px; font-size: 18px; line-height: 22px; font-style: italic; font-weight: 300; color: #00f; -webkit-text-stroke: .2px #00f; text-align: center; }
.hint-lang { height: 22px; line-height: 21px; letter-spacing: .52px; }
.hint-word { margin-top: 20px; letter-spacing: .37px; }
.hint-pick { margin-top: 20px; letter-spacing: .33px; }
.select { height: 20px; border: 1px solid #767676; border-radius: 2px; display: flex; align-items: center; justify-content: space-between; padding: 0 7px 0 4px; font-size: 15.500px; line-height: 16px; font-weight: 300; color: #111; }
.select span { padding-bottom: 2px; }
.select-lang { width: 178px; margin-top: 11px; }
.select-word { width: 148px; }
.grid { width: 921px; margin: 31px auto 0; padding: 1px; display: grid; grid-template-columns: 212px 632px 73px; grid-template-rows: 20px repeat(7, 28px) 92px; gap: 1px; background: #000; font-size: 15px; font-weight: 300; color: #111; }
.grid > div { background: #ffd2a6; display: flex; align-items: center; line-height: 18px; padding-bottom: 1px; }
.grid > .mid, .grid > .ok { justify-content: center; }
.grid > .ok { padding: 1px 0 0; }
.g1 { letter-spacing: -1.1px; }
.g2 { letter-spacing: -.7px; }
.g3 { letter-spacing: -.5px; }
.g4 { letter-spacing: -.6px; }
.g6 { letter-spacing: -.3px; }
.g8 { letter-spacing: -.1px; }
.mid b { color: #f00; font-size: 15.500px; font-weight: 700; }
.pick { font-size: 15.500px; }
.pick span { flex: none; }
.pick svg { margin-top: 1px; }
.pick-root, .pick-per { padding-left: 281px; }
.pick-root span, .pick-per span { width: 58px; }
.pick-per { letter-spacing: -.5px; }
.pick-cat { padding-left: 288px; letter-spacing: -.3px; }
.pick-cat span { width: 43px; }
.pick-gen { padding-left: 282px; letter-spacing: -.5px; }
.pick-gen span { width: 56px; }
.pick-num { padding-left: 279px; }
.pick-num span { width: 62px; }
.pick-case { padding-left: 280px; letter-spacing: -.5px; }
.pick-case span { width: 59px; }
.pick-tense { padding-left: 215px; }
.pick-tense span { width: 190px; }
.check { width: 57px; height: 26px; margin-right: 1px; padding: 0 0 1px; border: 1px solid #767676; border-radius: 3px; background: #efefef; font: 300 15.500px "Lato", sans-serif; color: #111; }
.grid > .answer { padding: 26px 0 0 215px; font-size: 30px; letter-spacing: .78px; color: #008000; -webkit-text-stroke: .3px #008000; }
.scrollbar { width: 25px; background: #f1f1f1; display: flex; flex-direction: column; }
.scrollbar i { width: 21px; height: 691px; margin: 0 2px auto; background: #c1c1c1; }

/* Taskbar */
.taskbar { height: 60px; display: flex; background: #363a3d; }
.start { width: 72px; padding: 18px 0 0 24px; background: #30363a; }
.search { width: 516px; border: 2px solid #606060; background: #333; display: flex; align-items: center; padding-left: 15px; gap: 17px; font-size: 21px; letter-spacing: .25px; color: #d8d8d8; }
.search svg { margin-top: -4px; }
.search span { padding-top: 3px; }
.pinned { width: 479px; background: linear-gradient(90deg, #362c22, #40372c 35%, #352d24); display: flex; align-items: center; padding: 0 0 0 24px; }
.taskview { margin-right: 31px; }
.grip { width: 5px; height: 36px; border: 1px solid #625a53; border-width: 0 1px; margin-right: 35px; }
.explorer { margin: 0 40px 0 41px; }
.lenovo { margin: 0 42px 0 38px; }
.running { width: 73px; background: #64605b; border-bottom: 3px solid #76b9ed; display: flex; align-items: center; justify-content: center; padding-top: 2px; }
.tray { flex: 1; display: flex; align-items: center; padding-left: 101px; }
.batt-text { font: 20px "Liberation Sans", sans-serif; fill: #fff; }
.weather { margin-left: 66px; }
.temp { width: 44px; margin: 4px 26px 0 15px; font-size: 20px; letter-spacing: -.4px; }
.cam { margin: 0 13px 0 20px; }
.batt { margin: 0 12px; }
.lang { width: 34px; margin: 0 20px 0 16px; font-size: 17px; letter-spacing: -.6px; }
.clock { width: 94px; display: flex; flex-direction: column; align-items: center; font-size: 17.500px; line-height: 28px; }
.time { letter-spacing: -.8px; }
.date { letter-spacing: -.05px; }
.notif { margin-left: 28px; }
.desktop-edge { width: 1px; height: 60px; background: #7b7d7f; margin: 0 6px 0 auto; }
```
